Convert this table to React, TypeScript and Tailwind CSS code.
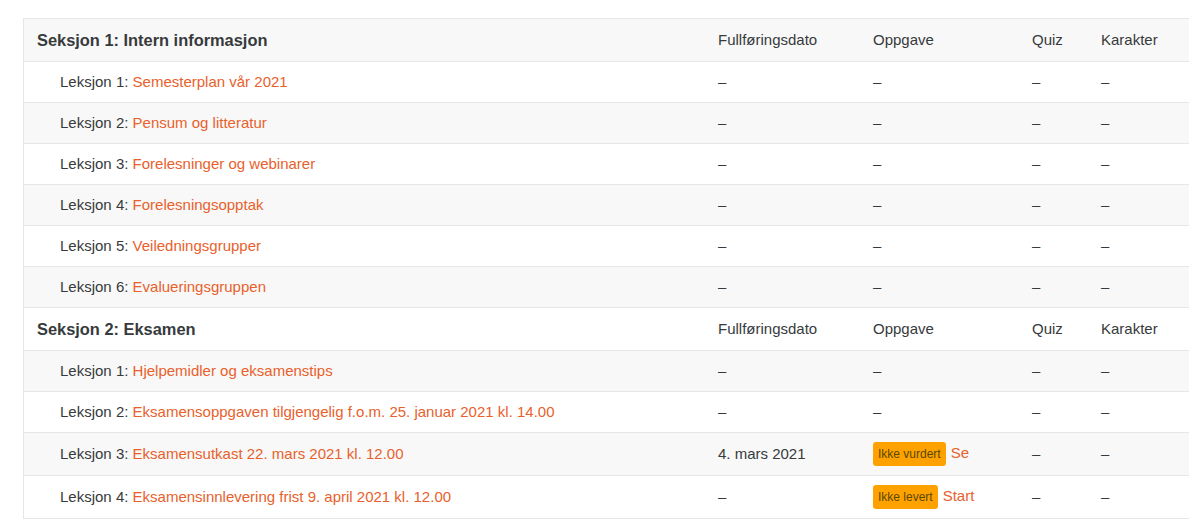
import React from "react";

type Lesson = {
  n: number;
  title: string;
  date?: string;
  badge?: string;
  action?: string;
};

type Section = {
  title: string;
  lessons: Lesson[];
};

const sections: Section[] = [
  {
    title: "Seksjon 1: Intern informasjon",
    lessons: [
      { n: 1, title: "Semesterplan vår 2021" },
      { n: 2, title: "Pensum og litteratur" },
      { n: 3, title: "Forelesninger og webinarer" },
      { n: 4, title: "Forelesningsopptak" },
      { n: 5, title: "Veiledningsgrupper" },
      { n: 6, title: "Evalueringsgruppen" },
    ],
  },
  {
    title: "Seksjon 2: Eksamen",
    lessons: [
      { n: 1, title: "Hjelpemidler og eksamenstips" },
      { n: 2, title: "Eksamensoppgaven tilgjengelig f.o.m. 25. januar 2021 kl. 14.00" },
      { n: 3, title: "Eksamensutkast 22. mars 2021 kl. 12.00", date: "4. mars 2021", badge: "Ikke vurdert", action: "Se" },
      { n: 4, title: "Eksamensinnlevering frist 9. april 2021 kl. 12.00", badge: "Ikke levert", action: "Start" },
    ],
  },
];

const grid = "grid grid-cols-[681px_155px_159px_69px_1fr] items-center border-b border-[#e6e6e6]";

export default function App() {
  let idx = 0;
  const stripe = () => (idx++ % 2 === 0 ? "bg-[#f8f8f8]" : "bg-white");

  return (
    <div className="w-screen h-screen overflow-hidden bg-white text-[15px] text-[#373a3c]" style={{ fontFamily: '"Liberation Sans", Arial, sans-serif' }}>
      <div className="pt-[18px] pl-[23px]">
        <div className="w-[1200px] border-l border-t border-[#e6e6e6]">
          {sections.map((s) => (
            <div key={s.title}>
              <div className={`${grid} ${stripe()} h-[43px]`}>
                <div className="pl-[13px] font-bold text-[16.4px]">{s.title}</div>
                <div className="pl-[13px]">Fullføringsdato</div>
                <div className="pl-[13px]">Oppgave</div>
                <div className="pl-[13px]">Quiz</div>
                <div className="pl-[13px]">Karakter</div>
              </div>
              {s.lessons.map((l) => (
                <div key={l.n} className={`${grid} ${stripe()} ${l.badge ? "h-[43px]" : "h-[41px]"}`}>
                  <div className="pl-[36px]">
                    Leksjon {l.n}: <a className="text-[#e8612c] cursor-pointer">{l.title}</a>
                  </div>
                  <div className="pl-[13px]">{l.date ?? "–"}</div>
                  <div className="pl-[13px] flex items-center gap-[5px]">
                    {l.badge ? (
                      <>
                        <span className="bg-[#ffa200] text-[#5a4800] text-[12px] leading-[24px] px-[5px] rounded-[3px]">{l.badge}</span>
                        <a className="text-[#e8612c] -mt-[2px] cursor-pointer">{l.action}</a>
                      </>
                    ) : (
                      "–"
                    )}
                  </div>
                  <div className="pl-[13px]">–</div>
                  <div className="pl-[13px]">–</div>
                </div>
              ))}
            </div>
          ))}
        </div>
      </div>
    </div>
  );
}
